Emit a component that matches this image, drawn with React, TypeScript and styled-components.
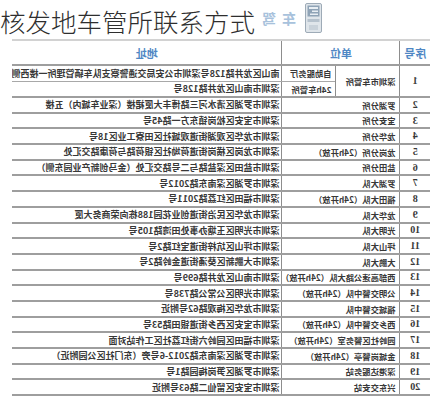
import styled, { createGlobalStyle } from "styled-components";

const GlobalStyle = createGlobalStyle`
  html, body {
    margin: 0;
    padding: 0;
    background: #ffffff;
  }
  body {
    font-family: "Noto Sans CJK SC", "Noto Sans", sans-serif;
  }
`

const Page = styled.div`
  width: 436px;
  height: 400px;
  overflow: hidden;
  background: #fff;
`

const TitleBar = styled.div`
  position: relative;
  height: 39px;
`

const Banner = styled.div`
  position: absolute;
  top: 3px;
  right: 114px;
  display: flex;
  align-items: center;
  gap: 9px;
  transform: scaleX(-1);
`

const BannerText = styled.span`
  font-size: 14px;
  font-weight: 700;
  letter-spacing: 6px;
  color: #a8c2dc;
  line-height: 30px;
`

const Title = styled.h1`
  position: relative;
  margin: 0;
  padding-top: 6px;
  font-size: 25.5px;
  line-height: 30px;
  font-weight: 300;
  color: #2e2e2e;
  white-space: nowrap;
`

const Table = styled.table`
  margin-left: 12px;
  width: 418px;
  table-layout: fixed;
  border-collapse: collapse;
  border-top: 2px solid #d2d2d2;
  transform: scaleX(-1);
  color: #333;
`

const HeadCell = styled.th<{ $edge?: boolean }>`
  height: 23px;
  padding: 0;
  font-size: 11px;
  font-weight: 700;
  color: #4f87c4;
  text-align: center;
  border-bottom: 2px solid #9e9e9e;
  border-right: ${p => (p.$edge ? "none" : "1px solid #8d8d8d")};
`

const Cell = styled.td<{ $kind: "no" | "unit" | "sub" | "addr"; $h?: number; $thin?: boolean }>`
  height: ${p => p.$h ?? 13.7}px;
  padding: 0 ${p => (p.$kind === "addr" ? 2 : p.$kind === "no" ? 0 : 4)}px;
  font-weight: 700;
  line-height: 1;
  white-space: nowrap;
  overflow: hidden;
  vertical-align: middle;
  text-align: ${p => (p.$kind === "no" ? "center" : "left")};
  font-family: ${p => (p.$kind === "no" ? '"Liberation Serif", serif' : '"Noto Sans CJK SC", sans-serif')};
  font-size: ${p => (p.$kind === "no" ? 10 : p.$kind === "addr" ? 9 : 8.3)}px;
  color: #383838;
  border-bottom: ${p => (p.$thin ? "1px solid #a8a8a8" : "2px solid #9e9e9e")};
  border-right: ${p => (p.$kind === "addr" ? "none" : "1px solid #8d8d8d")};
`

function KioskIcon() {
  return (
    <svg width="17" height="30" viewBox="0 0 17 30">
      <rect x="0.5" y="0.5" width="16" height="29" rx="1.5" fill="#dfe5ea" stroke="#9eabb7" />
      <rect x="2.5" y="2.5" width="12" height="11" fill="#8fa3b6" />
      <rect x="4" y="4" width="9" height="2" fill="#e8eef3" />
      <rect x="4" y="7.5" width="6" height="1.5" fill="#e8eef3" />
      <rect x="4" y="10.5" width="8" height="1.5" fill="#e8eef3" />
      <rect x="2.5" y="16" width="12" height="3" fill="#b6c2cd" />
      <rect x="4" y="22" width="9" height="5" fill="#c9d2da" />
    </svg>
  )
}

const rows: { unit: string; addr: string }[] = [
  { unit: "罗湖分所", addr: "深圳市罗湖区清水河三路博丰大厦裙楼（深业车城内）五楼" },
  { unit: "宝安分所", addr: "深圳市宝安区松岗镇东方一路45号" },
  { unit: "龙华分所", addr: "深圳市龙华区观湖街道观城社区田寮工业区18号" },
  { unit: "龙岗分所（24h开放）", addr: "深圳市龙岗区横岗街道荷坳社区银荷路与荷康路交汇处" },
  { unit: "盐田分所", addr: "深圳市盐田区深盐路与二号路交汇处（金马创新产业园东侧）" },
  { unit: "罗湖大队", addr: "深圳市罗湖区深南东路2012号" },
  { unit: "福田大队（24h开放）", addr: "深圳市福田区红荔路2011号" },
  { unit: "龙华大队", addr: "深圳市龙华区民治街道创业花园188栋向荣商务大厦" },
  { unit: "光明大队", addr: "深圳市光明区玉塘办事处田湾路105号" },
  { unit: "坪山大队", addr: "深圳市坪山区坑梓街道宝红路2号" },
  { unit: "大鹏大队", addr: "深圳市大鹏新区葵涌街道金岭路2号" },
  { unit: "西部高速公路大队（24h开放）", addr: "深圳市南山区龙井路699号" },
  { unit: "公明交警中队（24h开放）", addr: "深圳市光明区公常公路738号" },
  { unit: "福城交警中队", addr: "深圳市龙华区梅观路62号附近" },
  { unit: "西乡交警中队（24h开放）", addr: "深圳市宝安区西乡街道银田路53号" },
  { unit: "园岭社区警务室（24h开放）", addr: "深圳市福田区园岭六街红荔社区工作站对面" },
  { unit: "金城岗警亭（24h开放）", addr: "深圳市罗湖区深南东路2012-6号旁（东门社区公园附近）" },
  { unit: "深港达服务站", addr: "深圳市罗湖区笋岗梅园路1号" },
  { unit: "兴东交安站", addr: "深圳市宝安区留仙二路63号附近" },
]

export default function App() {
  return (
    <Page>
      <GlobalStyle />
      <TitleBar>
        <Banner>
          <KioskIcon />
          <BannerText>车驾</BannerText>
        </Banner>
        <Title>核发地车管所联系方式</Title>
      </TitleBar>
      <Table>
        <colgroup>
          <col style={{ width: 30 }} />
          <col style={{ width: 64 }} />
          <col style={{ width: 54 }} />
          <col style={{ width: 270 }} />
        </colgroup>
        <thead>
          <tr>
            <HeadCell>序号</HeadCell>
            <HeadCell colSpan={2}>单位</HeadCell>
            <HeadCell $edge>地址</HeadCell>
          </tr>
        </thead>
        <tbody>
          <tr>
            <Cell $kind="no" rowSpan={2}>1</Cell>
            <Cell $kind="unit" rowSpan={2}>深圳市车管所</Cell>
            <Cell $kind="sub" $h={14.5} $thin>自助服务厅</Cell>
            <Cell $kind="addr" $h={14.5} $thin>南山区龙井路128号深圳市公安局交通警察支队车辆管理所一楼西侧</Cell>
          </tr>
          <tr>
            <Cell $kind="sub" $h={14.5}>24h车管所</Cell>
            <Cell $kind="addr" $h={14.5}>深圳市南山区龙井路128号</Cell>
          </tr>
          {rows.map((r, i) => (
            <tr key={i}>
              <Cell $kind="no">{i + 2}</Cell>
              <Cell $kind="unit" colSpan={2}>{r.unit}</Cell>
              <Cell $kind="addr">{r.addr}</Cell>
            </tr>
          ))}
        </tbody>
      </Table>
    </Page>
  )
}
